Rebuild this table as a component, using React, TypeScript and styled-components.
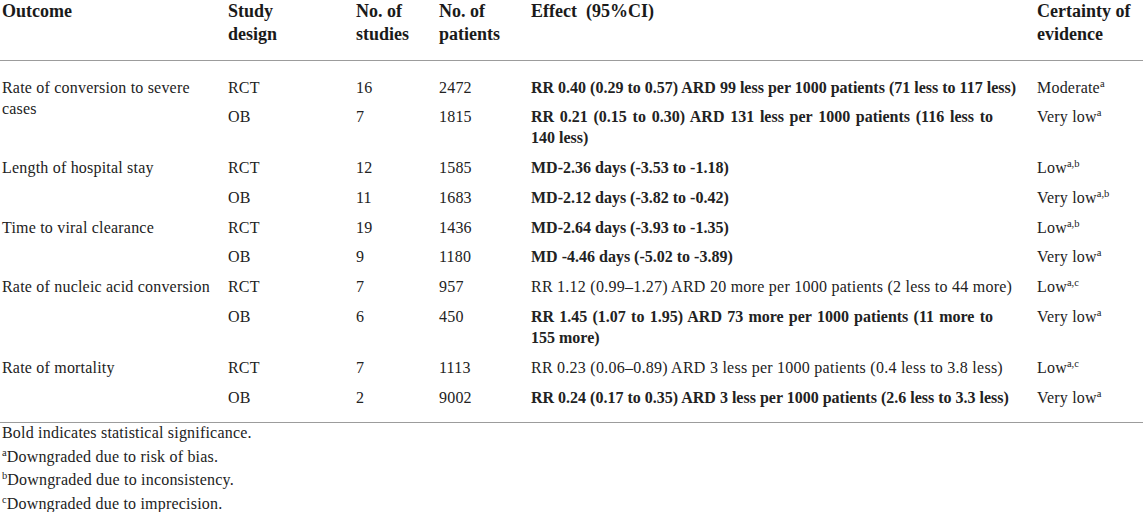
import React from 'react'
import styled, { createGlobalStyle } from 'styled-components'

const GlobalStyle = createGlobalStyle`
  html, body {
    margin: 0;
    padding: 0;
    background: #fff;
  }
  body {
    font-family: 'Liberation Serif', 'Times New Roman', serif;
    color: #222;
  }
`

type Row = {
  design: string
  studies: string
  patients: string
  effect: string
  bold?: boolean
  wrap?: boolean
  certainty: string
  marks: string
}

type Group = {
  outcome: string
  rows: Row[]
}

// 数据
const groups: Group[] = [
  {
    outcome: 'Rate of conversion to severe cases',
    rows: [
      {
        design: 'RCT',
        studies: '16',
        patients: '2472',
        effect: 'RR 0.40 (0.29 to 0.57) ARD 99 less per 1000 patients (71 less to 117 less)',
        bold: true,
        certainty: 'Moderate',
        marks: 'a'
      },
      {
        design: 'OB',
        studies: '7',
        patients: '1815',
        effect: 'RR 0.21 (0.15 to 0.30) ARD 131 less per 1000 patients (116 less to 140 less)',
        bold: true,
        wrap: true,
        certainty: 'Very low',
        marks: 'a'
      }
    ]
  },
  {
    outcome: 'Length of hospital stay',
    rows: [
      { design: 'RCT', studies: '12', patients: '1585', effect: 'MD-2.36 days (-3.53 to -1.18)', bold: true, certainty: 'Low', marks: 'a,b' },
      { design: 'OB', studies: '11', patients: '1683', effect: 'MD-2.12 days (-3.82 to -0.42)', bold: true, certainty: 'Very low', marks: 'a,b' }
    ]
  },
  {
    outcome: 'Time to viral clearance',
    rows: [
      { design: 'RCT', studies: '19', patients: '1436', effect: 'MD-2.64 days (-3.93 to -1.35)', bold: true, certainty: 'Low', marks: 'a,b' },
      { design: 'OB', studies: '9', patients: '1180', effect: 'MD -4.46 days (-5.02 to -3.89)', bold: true, certainty: 'Very low', marks: 'a' }
    ]
  },
  {
    outcome: 'Rate of nucleic acid conversion',
    rows: [
      {
        design: 'RCT',
        studies: '7',
        patients: '957',
        effect: 'RR 1.12 (0.99–1.27) ARD 20 more per 1000 patients (2 less to 44 more)',
        certainty: 'Low',
        marks: 'a,c'
      },
      {
        design: 'OB',
        studies: '6',
        patients: '450',
        effect: 'RR 1.45 (1.07 to 1.95) ARD 73 more per 1000 patients (11 more to 155 more)',
        bold: true,
        wrap: true,
        certainty: 'Very low',
        marks: 'a'
      }
    ]
  },
  {
    outcome: 'Rate of mortality',
    rows: [
      {
        design: 'RCT',
        studies: '7',
        patients: '1113',
        effect: 'RR 0.23 (0.06–0.89) ARD 3 less per 1000 patients (0.4 less to 3.8 less)',
        certainty: 'Low',
        marks: 'a,c'
      },
      {
        design: 'OB',
        studies: '2',
        patients: '9002',
        effect: 'RR 0.24 (0.17 to 0.35) ARD 3 less per 1000 patients (2.6 less to 3.3 less)',
        bold: true,
        certainty: 'Very low',
        marks: 'a'
      }
    ]
  }
]

const notes = [
  { mark: '', text: 'Bold indicates statistical significance.' },
  { mark: 'a', text: 'Downgraded due to risk of bias.' },
  { mark: 'b', text: 'Downgraded due to inconsistency.' },
  { mark: 'c', text: 'Downgraded due to imprecision.' }
]

const App: React.FC = () => {
  return (
    <Page>
      <GlobalStyle />
      <Table>
        <colgroup>
          <col style={{ width: 228 }} />
          <col style={{ width: 128 }} />
          <col style={{ width: 83 }} />
          <col style={{ width: 92 }} />
          <col style={{ width: 506 }} />
          <col style={{ width: 106 }} />
        </colgroup>
        <thead>
          <tr>
            <Th $first>Outcome</Th>
            <Th>
              Study
              <br />
              design
            </Th>
            <Th>
              No. of
              <br />
              studies
            </Th>
            <Th>
              No. of
              <br />
              patients
            </Th>
            <Th>Effect&nbsp; (95%CI)</Th>
            <Th>
              Certainty of
              <br />
              evidence
            </Th>
          </tr>
        </thead>
        <Body>
          {groups.map((g) =>
            g.rows.map((r, i) => (
              <tr key={g.outcome + r.design}>
                {i === 0 && (
                  <Td $first rowSpan={g.rows.length}>
                    <Outcome>{g.outcome}</Outcome>
                  </Td>
                )}
                <Td>{r.design}</Td>
                <Td>{r.studies}</Td>
                <Td>{r.patients}</Td>
                <EffectCell $bold={r.bold} $wrap={r.wrap}>
                  {r.effect}
                </EffectCell>
                <Td>
                  {r.certainty}
                  <Sup>{r.marks}</Sup>
                </Td>
              </tr>
            ))
          )}
        </Body>
      </Table>
      <Notes>
        {notes.map((n) => (
          <Note key={n.text}>
            {n.mark && <Sup>{n.mark}</Sup>}
            {n.text}
          </Note>
        ))}
      </Notes>
    </Page>
  )
}

const Page = styled.div`
  width: 1145px;
  font-family: 'Liberation Serif', 'Times New Roman', serif;
  color: #222;
`

const Table = styled.table`
  width: 1143px;
  table-layout: fixed;
  border-collapse: collapse;
  border-bottom: 1px solid #9c9c9c;
`

const Th = styled.th<{ $first?: boolean }>`
  text-align: left;
  vertical-align: top;
  font-size: 18px;
  font-weight: 700;
  line-height: 23px;
  color: #1a1a1a;
  padding: 0 0 14px ${(p) => (p.$first ? '2px' : '0')};
  border-bottom: 1px solid #9c9c9c;
  white-space: nowrap;
`

const Body = styled.tbody`
  tr:first-child td {
    padding-top: 15.5px;
  }
  tr:last-child td {
    padding-bottom: 14.5px;
  }
`

const Td = styled.td<{ $first?: boolean }>`
  vertical-align: top;
  text-align: left;
  font-size: 16px;
  line-height: 21px;
  letter-spacing: 0.2px;
  padding: 4.4px 0 4.4px ${(p) => (p.$first ? '2px' : '0')};
  white-space: nowrap;
`

const Outcome = styled.div`
  white-space: normal;
  width: 220px;
`

const EffectCell = styled(Td)<{ $bold?: boolean; $wrap?: boolean }>`
  font-weight: ${(p) => (p.$bold ? 700 : 400)};
  letter-spacing: ${(p) => (p.$bold ? '0' : '0.25px')};
  white-space: ${(p) => (p.$wrap ? 'normal' : 'nowrap')};
  text-align: ${(p) => (p.$wrap ? 'justify' : 'left')};
  padding-right: 44px;
`

const Sup = styled.sup`
  font-size: 10.5px;
  line-height: 0;
  vertical-align: 6px;
  letter-spacing: 0;
`

const Notes = styled.div`
  padding: 0 0 0 2px;
  margin-top: -2px;
  font-size: 16px;
  line-height: 23.5px;
  letter-spacing: 0.2px;
`

const Note = styled.div`
  white-space: nowrap;
`

export default App
